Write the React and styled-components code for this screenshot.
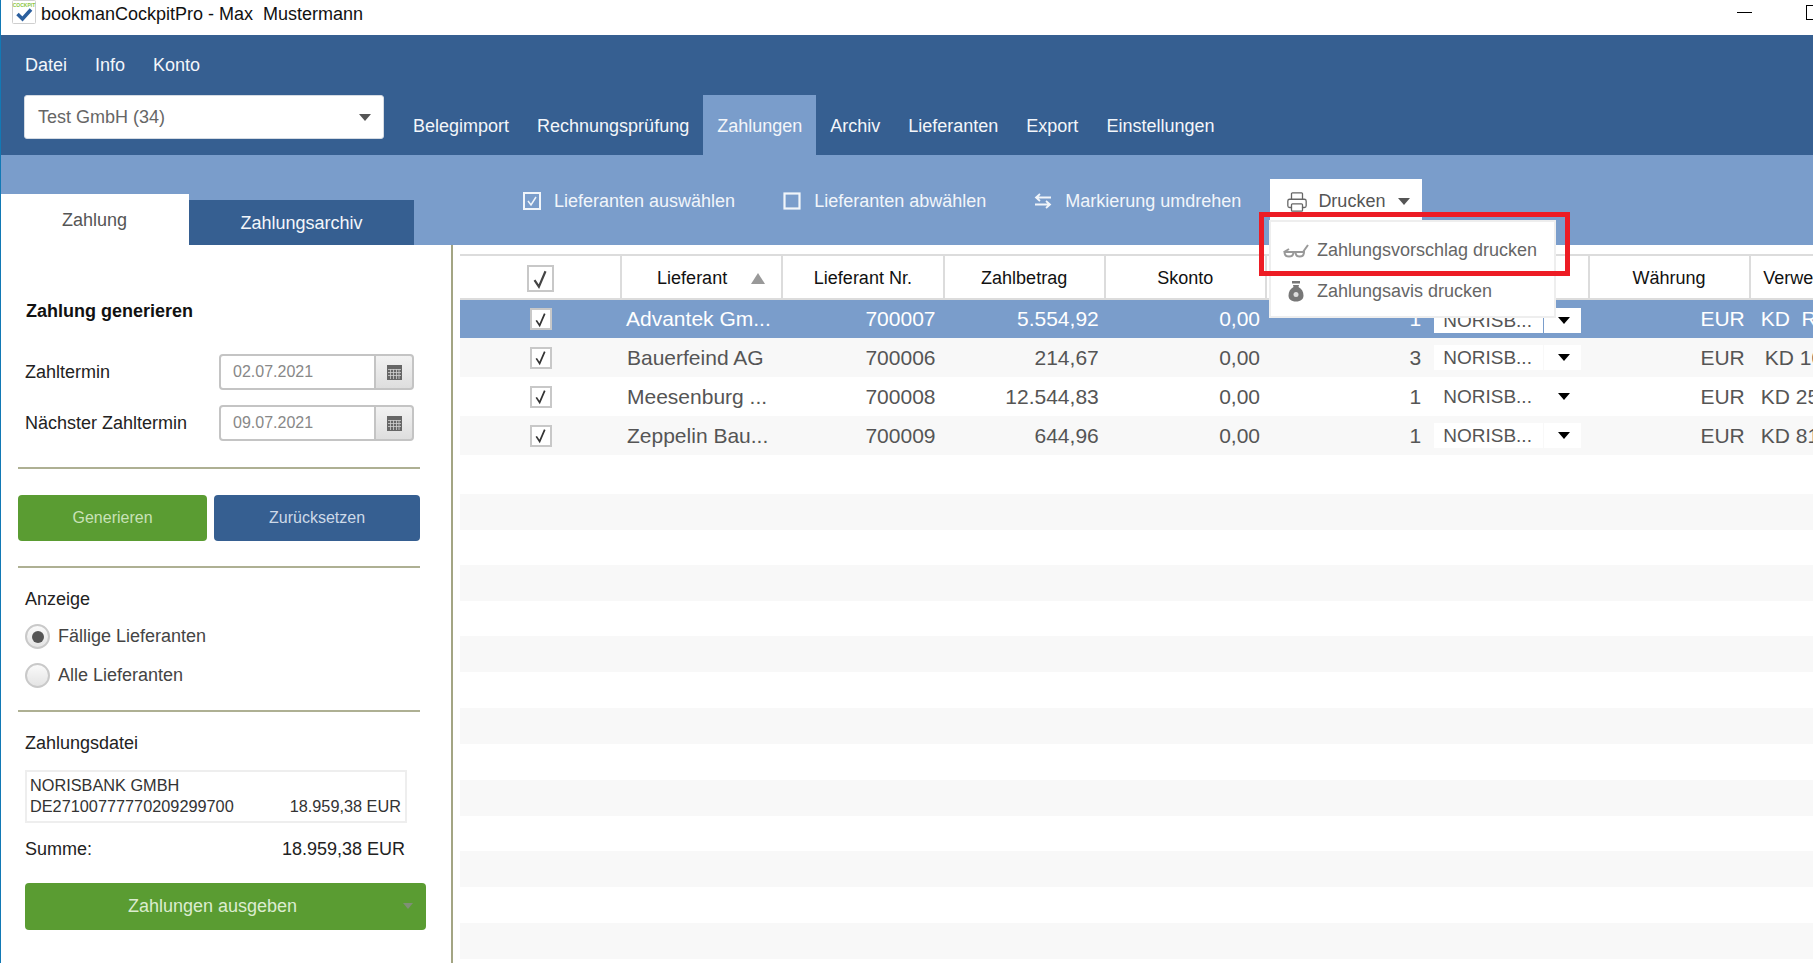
import React from 'react';
import styled, { createGlobalStyle } from 'styled-components';
import { Printer } from 'lucide-react';

const GlobalStyle = createGlobalStyle`
  html, body {
    margin: 0;
    padding: 0;
    background: #fff;
    overflow: hidden;
  }
  * { box-sizing: border-box; }
`;

const Page = styled.div`
  position: relative;
  width: 1813px;
  height: 963px;
  overflow: hidden;
  display: flex;
  flex-direction: column;
  font-family: "Liberation Sans", Arial, sans-serif;
  background: #fff;
  border-left: 1px solid #1279b5;
`;

const TitleBar = styled.div`
  height: 35px;
  flex: none;
  display: flex;
  align-items: flex-start;
  padding-left: 11px;
  background: #fff;
  color: #111;
  font-size: 18px;
`;

const TitleText = styled.span`
  margin-left: 5px;
  white-space: pre;
  line-height: 28px;
`;

const WinButtons = styled.div`
  margin-left: auto;
  display: flex;
  align-items: flex-start;
  height: 100%;
  width: 76px;
  flex: none;
  padding-top: 5px;
`;

const WinMin = styled.div`
  width: 15px;
  height: 1px;
  background: #000;
  margin-top: 7px;
  flex: none;
`;

const WinMax = styled.div`
  width: 14px;
  height: 15px;
  border: 1px solid #000;
  margin-left: 54px;
  flex: none;
`;

const Nav = styled.div`
  height: 120px;
  flex: none;
  background: #365f91;
  color: #fff;
  padding: 0 0 0 23px;
  display: flex;
  flex-direction: column;
`;

const MenuRow = styled.div`
  display: flex;
  gap: 28px;
  height: 60px;
  padding-left: 1px;
  align-items: center;
  font-size: 18px;
  color: #f3f6fa;
`;

const NavRow = styled.div`
  display: flex;
  flex: 1;
`;

const CompanySelect = styled.div`
  width: 360px;
  height: 44px;
  background: #fff;
  border-radius: 3px;
  border: 1px solid #d5dbe3;
  display: flex;
  align-items: center;
  justify-content: space-between;
  padding: 0 12px 0 13px;
  color: #666;
  font-size: 18px;
`;

const Caret = styled.span`
  display: inline-block;
  width: 0;
  height: 0;
  border-left: ${(p) => p.$size || 6}px solid transparent;
  border-right: ${(p) => p.$size || 6}px solid transparent;
  border-top: ${(p) => (p.$size || 6) + 1}px solid ${(p) => p.$color || '#555'};
`;

const Tabs = styled.div`
  display: flex;
  margin-left: 15px;
`;

const Tab = styled.div`
  padding: 2px 14px 0;
  height: 60px;
  display: flex;
  align-items: center;
  font-size: 18px;
  color: #f3f6fa;
  background: ${(p) => (p.$active ? '#7a9dcb' : 'transparent')};
`;

const Band = styled.div`
  height: 90px;
  flex: none;
  background: #7a9dcb;
  display: flex;
  position: relative;
`;

const SideTabs = styled.div`
  display: flex;
  align-items: flex-end;
  width: 523px;
  margin-left: -1px;
  flex: none;
`;

const SideTab = styled.div`
  width: ${(p) => p.$w}px;
  height: ${(p) => p.$h}px;
  display: flex;
  align-items: center;
  justify-content: center;
  font-size: 18px;
  padding-top: 2px;
  background: ${(p) => (p.$active ? '#fff' : '#365f91')};
  color: ${(p) => (p.$active ? '#555' : '#f3f6fa')};
`;

const Toolbar = styled.div`
  display: flex;
  align-items: flex-start;
  flex: 1;
`;

const ToolItem = styled.div`
  display: flex;
  align-items: center;
  gap: 13px;
  height: 50px;
  margin-top: 21px;
  margin-right: ${(p) => p.$mr}px;
  color: #f1f5fa;
  font-size: 18px;
  white-space: nowrap;
`;

const PrintButton = styled.div`
  display: flex;
  align-items: center;
  width: 152px;
  height: 58px;
  margin-top: 24px;
  padding: 0 0 13px 16px;
  gap: 10px;
  background: #fff;
  color: #555;
  font-size: 18px;
`;

const PrintCaret = styled.span`
  display: flex;
  margin-left: 3px;
`;

const Body = styled.div`
  flex: 1;
  display: flex;
  min-height: 0;
`;

const Sidebar = styled.div`
  width: 452px;
  flex: none;
  border-right: 2px solid #a3a583;
  padding: 0 31px 0 17px;
  color: #222;
  font-size: 18px;
`;

const SideTitle = styled.div`
  font-weight: bold;
  font-size: 18px;
  color: #111;
  margin: 55px 0 0 8px;
  height: 22px;
  line-height: 22px;
`;

const DateRow = styled.div`
  display: flex;
  align-items: center;
  height: 36px;
  margin-top: ${(p) => p.$mt}px;
  padding-left: 7px;
`;

const DateLabel = styled.div`
  width: 194px;
  flex: none;
  white-space: nowrap;
`;

const DateInput = styled.div`
  width: 157px;
  height: 36px;
  border: 2px solid #c4c4c4;
  border-radius: 4px 0 0 4px;
  background: #fff;
  color: #888;
  font-size: 16px;
  padding-left: 12px;
  display: flex;
  align-items: center;
`;

const DateButton = styled.div`
  width: 38px;
  height: 36px;
  border: 2px solid #c4c4c4;
  border-left: none;
  border-radius: 0 4px 4px 0;
  background: linear-gradient(#f2f2f2, #dedede);
  display: flex;
  align-items: center;
  justify-content: center;
`;

const Rule = styled.div`
  height: 2px;
  background: #aeb093;
  margin-top: ${(p) => p.$mt}px;
`;

const ActionRow = styled.div`
  display: flex;
  gap: 7px;
  margin-top: 26px;
`;

const ActionButton = styled.div`
  height: 46px;
  width: ${(p) => p.$w}px;
  border-radius: 4px;
  background: ${(p) => (p.$green ? '#5a9c32' : '#365f91')};
  color: ${(p) => (p.$green ? '#c9e2b8' : '#cdd9e8')};
  font-size: 16px;
  display: flex;
  align-items: center;
  justify-content: center;
`;

const SectionLabel = styled.div`
  margin: ${(p) => p.$mt}px 0 0 7px;
  height: 22px;
  line-height: 22px;
`;

const RadioRow = styled.div`
  display: flex;
  align-items: center;
  gap: 8px;
  height: 25px;
  margin: ${(p) => p.$mt}px 0 0 7px;
  color: #444;
`;

const Radio = styled.div`
  width: 25px;
  height: 25px;
  border-radius: 50%;
  border: 2px solid #c9c9c9;
  background: linear-gradient(#fafafa, #e4e4e4);
  display: flex;
  align-items: center;
  justify-content: center;
`;

const RadioDot = styled.div`
  width: 12px;
  height: 12px;
  border-radius: 50%;
  background: #555;
`;

const BankBox = styled.div`
  width: 382px;
  height: 53px;
  margin: 16px 0 0 7px;
  border: 2px solid #eeeeee;
  padding: 3px 4px 0 3px;
  font-size: 16.3px;
  line-height: 21px;
  color: #333;
`;

const BankRow = styled.div`
  display: flex;
  justify-content: space-between;
`;

const SumRow = styled.div`
  display: flex;
  justify-content: space-between;
  width: 380px;
  margin: 15px 0 0 7px;
  height: 22px;
  line-height: 22px;
`;

const PayButton = styled.div`
  position: relative;
  width: 401px;
  height: 47px;
  margin: 23px 0 0 7px;
  border-radius: 4px;
  background: #5a9c32;
  color: #dcecd0;
  font-size: 18px;
  display: flex;
  align-items: center;
  justify-content: center;
  padding-right: 26px;
`;

const PayCaret = styled.span`
  position: absolute;
  right: 13px;
  top: 20px;
  display: flex;
`;

const TableArea = styled.div`
  flex: 1;
  min-width: 0;
  overflow: hidden;
  padding: 9px 0 0 7px;
`;

const Table = styled.div`
  width: 1500px;
`;

const HeaderRow = styled.div`
  display: grid;
  grid-template-columns: 160px repeat(7, 161.25px) 186px;
  height: 46px;
  border-top: 2px solid #dcdcdc;
  border-bottom: 2px solid #dcdcdc;
`;

const HeaderCell = styled.div`
  display: flex;
  align-items: center;
  justify-content: center;
  gap: 24px;
  border-left: ${(p) => (p.$first ? 'none' : '2px solid #dcdcdc')};
  color: #111;
  font-size: 18px;
  padding-top: 3px;
  padding-left: ${(p) => p.$pl || 0}px;
  white-space: nowrap;
  overflow: hidden;
`;

const SortMark = styled.span`
  width: 0;
  height: 0;
  border-left: 7px solid transparent;
  border-right: 7px solid transparent;
  border-bottom: 11px solid #999;
`;

const Row = styled.div`
  display: grid;
  grid-template-columns: 160px repeat(7, 161.25px) 186px;
  height: ${(p) => p.$h}px;
  align-items: center;
  background: ${(p) => (p.$selected ? '#7a9dcb' : p.$odd ? '#f8f8f8' : '#fff')};
  color: ${(p) => (p.$selected ? '#fff' : '#555')};
  font-size: 21px;
`;

const CheckCell = styled.div`
  display: flex;
  justify-content: center;
  padding-left: 1px;
`;

const CheckBox = styled.div`
  width: ${(p) => p.$size}px;
  height: ${(p) => p.$size}px;
  border: 2px solid #c8c8c8;
  background: #fff;
  display: flex;
  align-items: center;
  justify-content: center;
`;

const NameCell = styled.div`
  padding-left: ${(p) => (p.$selected ? 6 : 7)}px;
  white-space: nowrap;
`;

const NumCell = styled.div`
  text-align: right;
  padding-right: ${(p) => p.$pr}px;
`;

const BankCell = styled.div`
  display: flex;
  height: 25px;
  margin-left: 8px;
  width: 147px;
  margin-top: ${(p) => (p.$selected ? 2 : 0)}px;
`;

const BankName = styled.div`
  width: 109px;
  background: #fff;
  color: #555;
  padding-left: 9px;
  line-height: 25px;
  font-size: 19px;
  white-space: nowrap;
`;

const BankCaret = styled.div`
  flex: 1;
  background: #fff;
  margin-left: 1px;
  padding-left: 3px;
  display: flex;
  align-items: center;
  justify-content: center;
`;

const CurrencyCell = styled.div`
  text-align: right;
  padding-right: 4px;
`;

const NoteCell = styled.div`
  padding-left: ${(p) => p.$pl}px;
  white-space: pre;
`;

const Dropdown = styled.div`
  position: absolute;
  left: 1268px;
  top: 220px;
  width: 287px;
  height: 98px;
  background: #fff;
  border: 2px solid #eeeeee;
  padding-top: 8px;
  color: #666;
  font-size: 18px;
`;

const DropItem = styled.div`
  display: flex;
  align-items: center;
  gap: 8px;
  height: 41px;
  padding-left: 12px;
`;

const DropIcon = styled.div`
  width: 26px;
  display: flex;
  justify-content: center;
`;

const Highlight = styled.div`
  position: absolute;
  left: 1258px;
  top: 212px;
  width: 311px;
  height: 64px;
  border: 5px solid #ed1c24;
  pointer-events: none;
`;

const CalendarIcon = () => (
  <svg width="15" height="15" viewBox="0 0 15 15">
    <rect x="0" y="0" width="15" height="15" fill="#666" />
    <path d="M1 4.5h13M1 7.5h13M1 10.5h13M3.500 4v10M6.500 4v10M9.500 4v10M12 4v10" stroke="#cfcfcf" strokeWidth="0.8" />
  </svg>
);

const LogoIcon = () => (
  <svg width="24" height="24" viewBox="0 0 24 24">
    <rect x="0.5" y="0.5" width="23" height="23" rx="1" fill="#fff" stroke="#cfcfcf" />
    <text x="12" y="6.500" textAnchor="middle" fontSize="5" fontWeight="bold" fill="#8cc63f" fontFamily="Liberation Sans">COCKPIT</text>
    <path d="M5.500 14l5 5 8.500-9.500" fill="none" stroke="#2b5f9e" strokeWidth="3.500" />
  </svg>
);

const CheckedBoxIcon = () => (
  <svg width="18" height="18" viewBox="0 0 18 18" fill="none" stroke="#f1f5fa">
    <rect x="1" y="1" width="16" height="16" strokeWidth="2" />
    <path d="M5 9l3 4 5-8" strokeWidth="1.500" />
  </svg>
);

const EmptyBoxIcon = () => (
  <svg width="18" height="18" viewBox="0 0 18 18" fill="none" stroke="#f1f5fa">
    <rect x="1.500" y="1.500" width="15" height="15" strokeWidth="2.200" />
  </svg>
);

const SwapIcon = () => (
  <svg width="18" height="18" viewBox="0 0 18 18" fill="none" stroke="#f1f5fa" strokeWidth="1.800">
    <path d="M17 5.500H3M6 2L2 5.500 6 9M1 12.500h14M12 9l4 3.500L12 16" />
  </svg>
);

const TickIcon = ({ size, color }) => (
  <svg width={size} height={size} viewBox="0 0 20 20" fill="none" stroke={color} strokeWidth="2">
    <path d="M5 11l4 6 6-14" />
  </svg>
);

const GlassesIcon = () => (
  <svg width="26" height="14" viewBox="0 0 26 14" fill="none" stroke="#999" strokeWidth="2">
    <path d="M1.500 8h9c0 3-1.500 4.500-4.500 4.500S1.500 11 1.500 8zM12.500 8h8.500c0 3-1.500 4.500-4.300 4.500S12.500 11 12.500 8z" />
    <path d="M10 8h3M1 8l5-3M20 8l5-7" />
  </svg>
);

const BagIcon = () => (
  <svg width="16" height="21" viewBox="0 0 16 21">
    <rect x="4" y="0" width="8" height="2.500" fill="#777" />
    <path d="M5 4h6l-.5 2c3 1.500 5 4.500 5 8.500 0 3.500-2.500 6-7.500 6S.5 18 .5 14.500c0-4 2-7 5-8.500z" fill="#777" />
    <circle cx="8" cy="13.500" r="2.500" fill="#ddd" />
  </svg>
);

const rows = [
  { name: 'Advantek Gm...', nr: '700007', amount: '5.554,92', count: '1', note: 'KD  R', pl: 12, h: 38, selected: true },
  { name: 'Bauerfeind AG', nr: '700006', amount: '214,67', count: '3', note: 'KD 10', pl: 16, h: 39, odd: true },
  { name: 'Meesenburg ...', nr: '700008', amount: '12.544,83', count: '1', note: 'KD 25', pl: 12, h: 39 },
  { name: 'Zeppelin Bau...', nr: '700009', amount: '644,96', count: '1', note: 'KD 81', pl: 12, h: 39, odd: true },
];

const emptyRows = [39, 36, 35, 36, 35, 36, 36, 36, 36, 36, 35, 36, 36, 36];

export default function App() {
  return (
    <Page>
      <GlobalStyle />
      <TitleBar>
        <LogoIcon />
        <TitleText>bookmanCockpitPro - Max  Mustermann</TitleText>
        <WinButtons>
          <WinMin />
          <WinMax />
        </WinButtons>
      </TitleBar>
      <Nav>
        <MenuRow>
          <span>Datei</span>
          <span>Info</span>
          <span>Konto</span>
        </MenuRow>
        <NavRow>
          <CompanySelect>
            Test GmbH (34)
            <Caret />
          </CompanySelect>
          <Tabs>
            <Tab>Belegimport</Tab>
            <Tab>Rechnungsprüfung</Tab>
            <Tab $active>Zahlungen</Tab>
            <Tab>Archiv</Tab>
            <Tab>Lieferanten</Tab>
            <Tab>Export</Tab>
            <Tab>Einstellungen</Tab>
          </Tabs>
        </NavRow>
      </Nav>
      <Band>
        <SideTabs>
          <SideTab $active $w={189} $h={51}>Zahlung</SideTab>
          <SideTab $w={225} $h={45}>Zahlungsarchiv</SideTab>
        </SideTabs>
        <Toolbar>
          <ToolItem $mr={48}>
            <CheckedBoxIcon />
            Lieferanten auswählen
          </ToolItem>
          <ToolItem $mr={48}>
            <EmptyBoxIcon />
            Lieferanten abwählen
          </ToolItem>
          <ToolItem $mr={29}>
            <SwapIcon />
            Markierung umdrehen
          </ToolItem>
          <PrintButton>
            <Printer size={22} strokeWidth={1.4} color="#666" />
            Drucken
            <PrintCaret><Caret /></PrintCaret>
          </PrintButton>
        </Toolbar>
      </Band>
      <Body>
        <Sidebar>
          <SideTitle>Zahlung generieren</SideTitle>
          <DateRow $mt={32}>
            <DateLabel>Zahltermin</DateLabel>
            <DateInput>02.07.2021</DateInput>
            <DateButton><CalendarIcon /></DateButton>
          </DateRow>
          <DateRow $mt={15}>
            <DateLabel>Nächster Zahltermin</DateLabel>
            <DateInput>09.07.2021</DateInput>
            <DateButton><CalendarIcon /></DateButton>
          </DateRow>
          <Rule $mt={26} />
          <ActionRow>
            <ActionButton $green $w={190}>Generieren</ActionButton>
            <ActionButton $w={207}>Zurücksetzen</ActionButton>
          </ActionRow>
          <Rule $mt={25} />
          <SectionLabel $mt={20}>Anzeige</SectionLabel>
          <RadioRow $mt={14}>
            <Radio><RadioDot /></Radio>
            Fällige Lieferanten
          </RadioRow>
          <RadioRow $mt={14}>
            <Radio />
            Alle Lieferanten
          </RadioRow>
          <Rule $mt={22} />
          <SectionLabel $mt={20}>Zahlungsdatei</SectionLabel>
          <BankBox>
            NORISBANK GMBH
            <BankRow>
              <span>DE27100777770209299700</span>
              <span>18.959,38 EUR</span>
            </BankRow>
          </BankBox>
          <SumRow>
            <span>Summe:</span>
            <span>18.959,38 EUR</span>
          </SumRow>
          <PayButton>
            Zahlungen ausgeben
            <PayCaret><Caret $size={5} $color="#7f8f76" /></PayCaret>
          </PayButton>
        </Sidebar>
        <TableArea>
          <Table>
            <HeaderRow>
              <HeaderCell $first>
                <CheckBox $size={27}><TickIcon size={22} color="#444" /></CheckBox>
              </HeaderCell>
              <HeaderCell $pl={19}>Lieferant<SortMark /></HeaderCell>
              <HeaderCell>Lieferant Nr.</HeaderCell>
              <HeaderCell>Zahlbetrag</HeaderCell>
              <HeaderCell>Skonto</HeaderCell>
              <HeaderCell>Anzahl</HeaderCell>
              <HeaderCell>Bank</HeaderCell>
              <HeaderCell>Währung</HeaderCell>
              <HeaderCell>Verwendungszweck</HeaderCell>
            </HeaderRow>
            {rows.map((r) => (
              <Row key={r.nr} $h={r.h} $selected={r.selected} $odd={r.odd}>
                <CheckCell>
                  <CheckBox $size={22}><TickIcon size={17} color="#333" /></CheckBox>
                </CheckCell>
                <NameCell $selected={r.selected}>{r.name}</NameCell>
                <NumCell $pr={7}>{r.nr}</NumCell>
                <NumCell $pr={5}>{r.amount}</NumCell>
                <NumCell $pr={5}>{'0,00'}</NumCell>
                <NumCell $pr={5}>{r.count}</NumCell>
                <BankCell $selected={r.selected}>
                  <BankName>NORISB...</BankName>
                  <BankCaret><Caret $size={6} $color="#000" /></BankCaret>
                </BankCell>
                <CurrencyCell>EUR</CurrencyCell>
                <NoteCell $pl={r.pl}>{r.note}</NoteCell>
              </Row>
            ))}
            {emptyRows.map((h, i) => (
              <Row key={i} $h={h} $odd={i % 2 === 1} />
            ))}
          </Table>
        </TableArea>
      </Body>
      <Dropdown>
        <DropItem>
          <DropIcon><GlassesIcon /></DropIcon>
          Zahlungsvorschlag drucken
        </DropItem>
        <DropItem>
          <DropIcon><BagIcon /></DropIcon>
          Zahlungsavis drucken
        </DropItem>
      </Dropdown>
      <Highlight />
    </Page>
  );
}
